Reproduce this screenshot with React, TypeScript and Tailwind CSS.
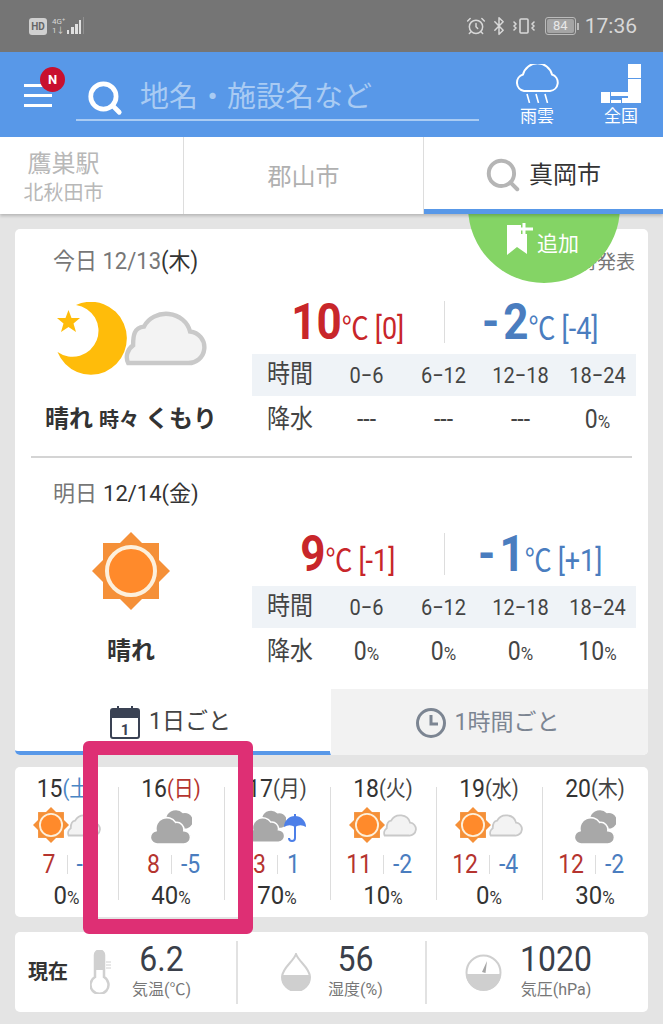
import React from "react";
import { AlarmClock, Bluetooth, Search, Vibrate } from "lucide-react";

// 共通の雲パス
const CLOUD = "M4 56 H64 A16 16 0 0 0 67 24 A25 23 0 0 0 20 19 C10 20 9 28 9 38 C3 42 1 50 4 56 Z";

function Sun({ size }: { size: number }) {
  return (
    <svg width={size} height={size} viewBox="0 0 78 78" className="shrink-0">
      <rect x="11" y="11" width="56" height="56" fill="#f59038" />
      <polygon points="39,0 78,39 39,78 0,39" fill="#f59038" />
      <circle cx="39" cy="39" r="24" fill="#ff8a2b" stroke="#fdf0dc" strokeWidth="4" />
    </svg>
  );
}

function LightCloud({ width }: { width: number }) {
  return (
    <svg width={width} height={width * 0.71} viewBox="0 0 84 60" className="shrink-0">
      <path d={CLOUD} fill="#f3f3f3" stroke="#c9c9c9" strokeWidth="4.500" />
    </svg>
  );
}

function DarkCloud({ width }: { width: number }) {
  return (
    <svg width={width} height={width} viewBox="0 0 40 40" className="shrink-0">
      <path d="M15 12 A9.500 9.500 0 0 1 31 8 A7 7 0 0 1 35 23 H20 Z" fill="#a8a8a8" />
      <path
        d="M7 38 A6.500 6.500 0 0 1 5 25 A10.500 10.500 0 0 1 24 17 A7 7 0 0 1 32 25 A6.500 6.500 0 0 1 32 38 Z"
        fill="#a8a8a8"
        stroke="#ffffff"
        strokeWidth="1.500"
      />
    </svg>
  );
}

function Umbrella() {
  return (
    <svg width="24" height="32" viewBox="0 0 24 32" className="shrink-0">
      <path d="M1 15 A11 11 0 0 1 23 15 Q17.500 11.500 12 15 Q6.500 11.500 1 15 Z" fill="#4d7fe8" />
      <path d="M12 2 V26 A3 3 0 0 1 6 26" fill="none" stroke="#4d7fe8" strokeWidth="2" />
    </svg>
  );
}

function MoonCloud() {
  return (
    <div className="flex items-center h-[74px]">
      <svg width="74" height="74" viewBox="0 0 74 74" className="shrink-0 relative z-10">
        <path d="M20 3 A36 36.500 0 1 1 1.500 50 A26 26 0 1 0 20 3 Z" fill="#ffbc0a" />
        <polygon
          points="12.500,8 15.500,16 24,16 17.500,21.500 20,30 12.500,25 5,30 7.500,21.500 1,16 9.500,16"
          fill="#ffbc0a"
        />
      </svg>
      <div className="-ml-[6px] -mt-[4px]">
        <LightCloud width={83} />
      </div>
    </div>
  );
}

function TempRow({ hi, hiDiff, lo, loDiff }: { hi: string; hiDiff: string; lo: string; loDiff: string }) {
  return (
    <div className="flex items-center h-[42px]">
      <div className="flex-1 flex items-baseline justify-center text-[#c8262a] scale-y-[1.15]">
        <span className="text-[44px] leading-none font-bold">{hi}</span>
        <span className="text-[27px] leading-none">℃</span>
        <span className="text-[27px] leading-none ml-[6px]">{hiDiff}</span>
      </div>
      <div className="w-px h-[42px] bg-[#dddddd]" />
      <div className="flex-1 flex items-baseline justify-center text-[#4a7dbf] scale-y-[1.15]">
        <span className="text-[44px] leading-none font-bold mr-[4px]">-</span>
        <span className="text-[44px] leading-none font-bold">{lo}</span>
        <span className="text-[27px] leading-none">℃</span>
        <span className="text-[27px] leading-none ml-[6px]">{loDiff}</span>
      </div>
    </div>
  );
}

function RainTable({ values }: { values: string[] }) {
  const hours = ["0-6", "6-12", "12-18", "18-24"];
  return (
    <div className="mt-[11px]">
      <div className="grid grid-cols-[76px_repeat(4,77px)] items-center h-[42px] bg-[#eff3f7] text-[#444]">
        <span className="text-center text-[23px] scale-y-[1.12]">時間</span>
        {hours.map((h) => (
          <span key={h} className="text-center text-[20px] scale-y-[1.12]">
            {h.replace("-", "−")}
          </span>
        ))}
      </div>
      <div className="grid grid-cols-[76px_repeat(4,77px)] items-center h-[44px] mt-[2px] text-[#444]">
        <span className="text-center text-[23px] scale-y-[1.12]">降水</span>
        {values.map((v, i) => (
          <span key={i} className="text-center text-[23px] scale-y-[1.12]">
            {v.endsWith("%") ? (
              <>
                {v.slice(0, -1)}
                <span className="text-[17px]">%</span>
              </>
            ) : (
              v
            )}
          </span>
        ))}
      </div>
    </div>
  );
}

type Day = {
  date: string;
  week: string;
  weekColor: string;
  icon: React.ReactNode;
  hi: string;
  lo: string;
  rain: string;
};

const sunCloud = (
  <div className="flex items-center">
    <Sun size={36} />
    <div className="-ml-[2px]">
      <LightCloud width={34} />
    </div>
  </div>
);

const days: Day[] = [
  { date: "15", week: "(土)", weekColor: "text-[#4a86c5]", icon: sunCloud, hi: "7", lo: "-3", rain: "0" },
  { date: "16", week: "(日)", weekColor: "text-[#b5342f]", icon: <DarkCloud width={41} />, hi: "8", lo: "-5", rain: "40" },
  {
    date: "17",
    week: "(月)",
    weekColor: "text-[#444]",
    icon: (
      <div className="flex items-end">
        <DarkCloud width={38} />
        <div className="-ml-[3px]">
          <Umbrella />
        </div>
      </div>
    ),
    hi: "13",
    lo: "1",
    rain: "70",
  },
  { date: "18", week: "(火)", weekColor: "text-[#444]", icon: sunCloud, hi: "11", lo: "-2", rain: "10" },
  { date: "19", week: "(水)", weekColor: "text-[#444]", icon: sunCloud, hi: "12", lo: "-4", rain: "0" },
  { date: "20", week: "(木)", weekColor: "text-[#444]", icon: <DarkCloud width={41} />, hi: "12", lo: "-2", rain: "30" },
];

function DayColumn({ day, first }: { day: Day; first: boolean }) {
  return (
    <div className="relative flex flex-col items-center pt-[8px] h-[150px]">
      {!first && <span className="absolute left-0 top-[20px] bottom-[17px] w-px bg-[#dddddd]" />}
      <div className="h-[26px] flex items-center text-[23px] text-[#333] leading-none scale-y-[1.1]">
        {day.date}
        <span className={`text-[20px] ${day.weekColor}`}>{day.week}</span>
      </div>
      <div className="h-[36px] mt-[6px] flex items-center justify-center">{day.icon}</div>
      <div className="grid grid-cols-2 w-full items-center h-[24px] mt-[9px] text-[23px] leading-none">
        <span className="text-right pr-[11px] text-[#b5342f] scale-y-[1.12]">{day.hi}</span>
        <span className="relative text-left pl-[10px] text-[#4a7dbf] scale-y-[1.12]">
          <span className="absolute left-0 top-[3px] bottom-[3px] w-px bg-[#dddddd]" />
          {day.lo}
        </span>
      </div>
      <div className="mt-[7px] text-[24px] leading-none text-[#333] scale-y-[1.08]">
        {day.rain}
        <span className="text-[17px]">%</span>
      </div>
    </div>
  );
}

function Reading({ value, label, className }: { value: string; label: string; className: string }) {
  return (
    <div className={`flex flex-col items-center -mt-[2px] ${className}`}>
      <span className="text-[32px] leading-[34px] text-[#3a3f4a] scale-y-[1.1]">{value}</span>
      <span className="text-[16px] leading-[20px] mt-[4px] text-[#777]">{label}</span>
    </div>
  );
}

export default function App() {
  return (
    <div
      className="relative w-[663px] h-[1024px] overflow-hidden bg-[#e4e4e4]"
      style={{ fontFamily: 'Roboto, "Noto Sans CJK JP", sans-serif' }}
    >
      {/* ステータスバー */}
      <div className="relative z-20 h-[52px] bg-[#757575] flex items-center pl-[29px] pr-[26px] text-[#d8d8d8]">
        <span className="w-[18px] h-[17px] rounded-[3px] bg-[#d0d0d0] text-[#666] text-[10px] font-bold flex items-center justify-center">
          HD
        </span>
        <span className="ml-[5px] w-[15px] text-[8px] leading-[9px]">4G⁺ 1↓</span>
        <svg width="20" height="20" viewBox="0 0 20 20">
          <rect x="0" y="14" width="2" height="4" fill="#e0e0e0" />
          <rect x="4" y="11" width="3" height="7" fill="#e0e0e0" />
          <rect x="8" y="8" width="3" height="10" fill="#e0e0e0" />
          <rect x="12" y="4" width="2" height="14" fill="#e0e0e0" />
          <rect x="16" y="1" width="1" height="17" fill="#8f8f8f" />
        </svg>
        <div className="ml-auto flex items-center">
          <AlarmClock size={20} strokeWidth={1.8} />
          <Bluetooth size={20} strokeWidth={1.8} className="ml-[3px]" />
          <Vibrate size={24} strokeWidth={1.6} className="ml-[3px]" />
          <span className="ml-[9px] w-[31px] h-[18px] rounded-[3px] border border-[#bbb] p-[1px] flex">
            <span className="flex-1 bg-[#a5a5a5] rounded-[2px] text-[13px] leading-[14px] text-center text-[#e8e8e8]">84</span>
          </span>
          <span className="w-[2px] h-[7px] bg-[#bbb] ml-[1px]" />
          <span className="ml-[6px] text-[21px] leading-none">17:36</span>
        </div>
      </div>

      {/* ヘッダー */}
      <div className="relative z-20 h-[85px] bg-[#5898e8] flex items-start">
        <div className="relative ml-[24px] mt-[32px] w-[28px] flex flex-col gap-[7px]">
          <span className="h-[3px] bg-white" />
          <span className="h-[3px] bg-white" />
          <span className="h-[3px] bg-white" />
          <span className="absolute -right-[13px] -top-[17px] w-[25px] h-[25px] rounded-full bg-[#c8102e] text-white text-[13px] font-bold flex items-center justify-center">
            N
          </span>
        </div>
        <div className="ml-[24px] mt-[24px] w-[403px] h-[45px] border-b-2 border-[#a9cbf3] flex items-center pl-[10px]">
          <Search size={38} strokeWidth={3} color="#ffffff" />
          <span className="ml-[16px] text-[29px] leading-none text-[#a9cbf3]">地名・施設名など</span>
        </div>
        <div className="ml-[35px] mt-[12px] flex flex-col items-center w-[46px]">
          <svg width="46" height="39" viewBox="0 0 46 39">
            <path
              d="M10 27 H36 A8.500 8.500 0 0 0 38 10.500 A15 15 0 0 0 9 10.500 A8.500 8.500 0 0 0 10 27 Z"
              fill="none"
              stroke="#ffffff"
              strokeWidth="2"
            />
            <path d="M13 30 L15.500 39 M22 30 L24.500 39 M31 30 L33.500 39" stroke="#ffffff" strokeWidth="1.600" />
          </svg>
          <span className="text-[17px] leading-[20px] mt-[3px] text-white">雨雲</span>
        </div>
        <div className="ml-[40px] mt-[12px] flex flex-col items-center w-[42px]">
          <svg width="40" height="40" viewBox="0 0 40 40">
            <rect x="27" y="0" width="13" height="14" fill="#ffffff" />
            <rect x="27" y="15" width="13" height="24" fill="#ffffff" />
            <rect x="0" y="28" width="9" height="11" fill="#ffffff" />
            <rect x="10" y="28" width="17" height="4" fill="#ffffff" />
            <rect x="21" y="34" width="6" height="5" fill="#ffffff" />
            <rect x="10" y="36" width="10" height="3" fill="#ffffff" />
          </svg>
          <span className="text-[17px] leading-[20px] mt-[2px] text-white">全国</span>
        </div>
      </div>

      {/* 地点タブ */}
      <div className="relative z-10 h-[77px] bg-white flex shadow-[0_2px_3px_rgba(0,0,0,0.2)]">
        <div className="w-[184px] border-r border-[#dddddd] flex flex-col items-center pt-[11px] pr-[56px]">
          <span className="text-[24px] leading-[32px] text-[#b8b8b8]">鷹巣駅</span>
          <span className="text-[20px] leading-[26px] text-[#b8b8b8]">北秋田市</span>
        </div>
        <div className="w-[240px] flex items-center justify-center pt-[3px] text-[24px] text-[#b0b0b0] border-r border-[#dddddd]">
          郡山市
        </div>
        <div className="flex-1 flex items-center pl-[60px] pt-[3px] border-b-[5px] border-[#5898e8]">
          <Search size={38} strokeWidth={2.5} color="#b5b5b5" />
          <span className="ml-[7px] text-[24px] text-[#333]">真岡市</span>
        </div>
      </div>

      {/* 今日と明日 */}
      <div className="relative mx-[15px] mt-[15px] h-[526px] bg-white rounded-[5px]">
        <div className="absolute left-[453px] -top-[100px] w-[152px] h-[154px] rounded-full bg-[#84d465] z-[5]">
          <div className="absolute left-[37px] top-[100px] flex items-center text-white">
            <svg width="30" height="34" viewBox="0 0 30 34" className="-mt-[6px]">
              <path d="M2 2 H16 V11 H22 V31 L12 24 L2 32 Z" fill="#ffffff" />
              <path d="M19 0 V12 M14 6 H28" stroke="#ffffff" strokeWidth="3" />
            </svg>
            <span className="text-[21px] leading-none ml-[2px] mt-[2px]">追加</span>
          </div>
        </div>

        <section className="h-[229px] mx-[16px] border-b-2 border-[#d4d4d4]">
          <div className="flex justify-between items-center pt-[16px] -mr-[3px] pl-[22px] h-[50px]">
            <div className="text-[22px] leading-none text-[#777] scale-y-[1.05]">
              今日 12/13<span className="text-[#333]">(木)</span>
            </div>
            <div className="text-[19px] leading-none text-[#777]">6時発表</div>
          </div>
          <div className="flex mt-[23px]">
            <div className="w-[200px] shrink-0 flex flex-col items-center">
              <MoonCloud />
              <div className="mt-[26px] text-[#333] font-bold text-[24px] leading-[34px] whitespace-nowrap">
                晴れ <span className="text-[20px]">時々</span> くもり
              </div>
            </div>
            <div className="ml-[21px] w-[384px] shrink-0 -mt-[1px]">
              <TempRow hi="10" hiDiff="[0]" lo="2" loDiff="[-4]" />
              <RainTable values={["---", "---", "---", "0%"]} />
            </div>
          </div>
        </section>

        <section className="h-[231px] mx-[16px]">
          <div className="flex items-center pt-[14px] pl-[22px] h-[58px] text-[22px] leading-none text-[#777]">
            明日<span className="ml-[6px] text-[#333]">12/14(金)</span>
          </div>
          <div className="flex mt-[16px]">
            <div className="w-[200px] shrink-0 flex flex-col items-center">
              <Sun size={78} />
              <div className="mt-[24px] text-[#333] font-bold text-[24px] leading-[34px]">晴れ</div>
            </div>
            <div className="ml-[21px] w-[384px] shrink-0 mt-[1px]">
              <TempRow hi="9" hiDiff="[-1]" lo="1" loDiff="[+1]" />
              <RainTable values={["0%", "0%", "0%", "10%"]} />
            </div>
          </div>
        </section>

        <div className="flex h-[66px]">
          <div className="w-[316px] border-b-[4px] border-[#5898e8] rounded-bl-[5px] flex items-center justify-center pr-[4px] pt-[4px] text-[23px] text-[#444] border-r border-r-white">
            <svg width="30" height="34" viewBox="0 0 30 34">
              <rect x="1" y="4" width="28" height="29" rx="2" fill="#ffffff" stroke="#3a4254" strokeWidth="2" />
              <path d="M1 4 H29 V13 H1 Z" fill="#3a4254" />
              <path d="M8 1 V6 M22 1 V6" stroke="#3a4254" strokeWidth="2" />
              <text x="15" y="30" textAnchor="middle" fontSize="15" fontWeight="700" fill="#3a4254">
                1
              </text>
            </svg>
            <span className="ml-[9px]">1日ごと</span>
          </div>
          <div className="flex-1 bg-[#f2f2f2] rounded-br-[5px] flex items-center justify-center pr-[4px] pt-[2px] text-[23px] text-[#7c8592]">
            <svg width="30" height="30" viewBox="0 0 30 30">
              <circle cx="15" cy="15" r="13.500" fill="none" stroke="#7c8592" strokeWidth="3" />
              <path d="M15 7 V16 H22" fill="none" stroke="#7c8592" strokeWidth="3" />
            </svg>
            <span className="ml-[9px]">1時間ごと</span>
          </div>
        </div>
      </div>

      {/* 週間予報 */}
      <div className="mx-[15px] mt-[12px] h-[150px] bg-white rounded-[5px] grid grid-cols-[103px_repeat(5,1fr)]">
        {days.map((d, i) => (
          <DayColumn key={d.date} day={d} first={i === 0} />
        ))}
      </div>

      {/* 現在の観測値 */}
      <div className="mx-[15px] mt-[15px] h-[80px] bg-white rounded-[5px] flex items-center">
        <div className="w-[223px] h-[63px] border-r-2 border-[#e2e2e2] flex items-center">
          <span className="ml-[13px] text-[20px] font-bold text-[#333]">現在</span>
          <svg width="22" height="44" viewBox="0 0 22 44" className="ml-[22px]">
            <path d="M5 5 A4.500 4.500 0 0 1 14 5 V27 A9 9 0 1 1 5 27 Z" fill="#ffffff" stroke="#d0d0d0" strokeWidth="2.500" />
            <path d="M5 5 A4.500 4.500 0 0 1 14 5 V20 H5 Z" fill="#d0d0d0" />
            <path d="M16 12 H21 M16 15 H21 M16 18 H21" stroke="#d0d0d0" strokeWidth="1" />
          </svg>
          <Reading value="6.2" label="気温(℃)" className="ml-[20px]" />
        </div>
        <div className="w-[189px] h-[63px] border-r-2 border-[#e2e2e2] flex items-center">
          <svg width="30" height="38" viewBox="0 0 30 38" className="ml-[43px]">
            <path d="M15 1 C13 8 1 15 1 24 A14 14 0 0 0 29 24 C29 15 17 8 15 1 Z" fill="#ffffff" stroke="#cfcfcf" strokeWidth="2" />
            <path d="M1 22 H29 V24 A14 14 0 0 1 1 24 Z" fill="#cfcfcf" />
          </svg>
          <Reading value="56" label="湿度(%)" className="ml-[17px]" />
        </div>
        <div className="flex-1 h-[63px] flex items-center">
          <svg width="37" height="37" viewBox="0 0 37 37" className="ml-[38px]">
            <circle cx="18.500" cy="18.500" r="17" fill="#ffffff" stroke="#cfcfcf" strokeWidth="2" />
            <path d="M1 20 H36 A17.500 17 0 0 1 1 20 Z" fill="#cfcfcf" />
            <path d="M17 18 L22 7 L20.500 19 Z" fill="#a5a5a5" />
          </svg>
          <Reading value="1020" label="気圧(hPa)" className="ml-[18px]" />
        </div>
      </div>

      {/* 強調の枠 */}
      <div className="absolute left-[83px] top-[741px] w-[170px] h-[193px] border-[15px] border-t-[14px] border-[#de2f74] rounded-[6px] z-30" />
    </div>
  );
}
